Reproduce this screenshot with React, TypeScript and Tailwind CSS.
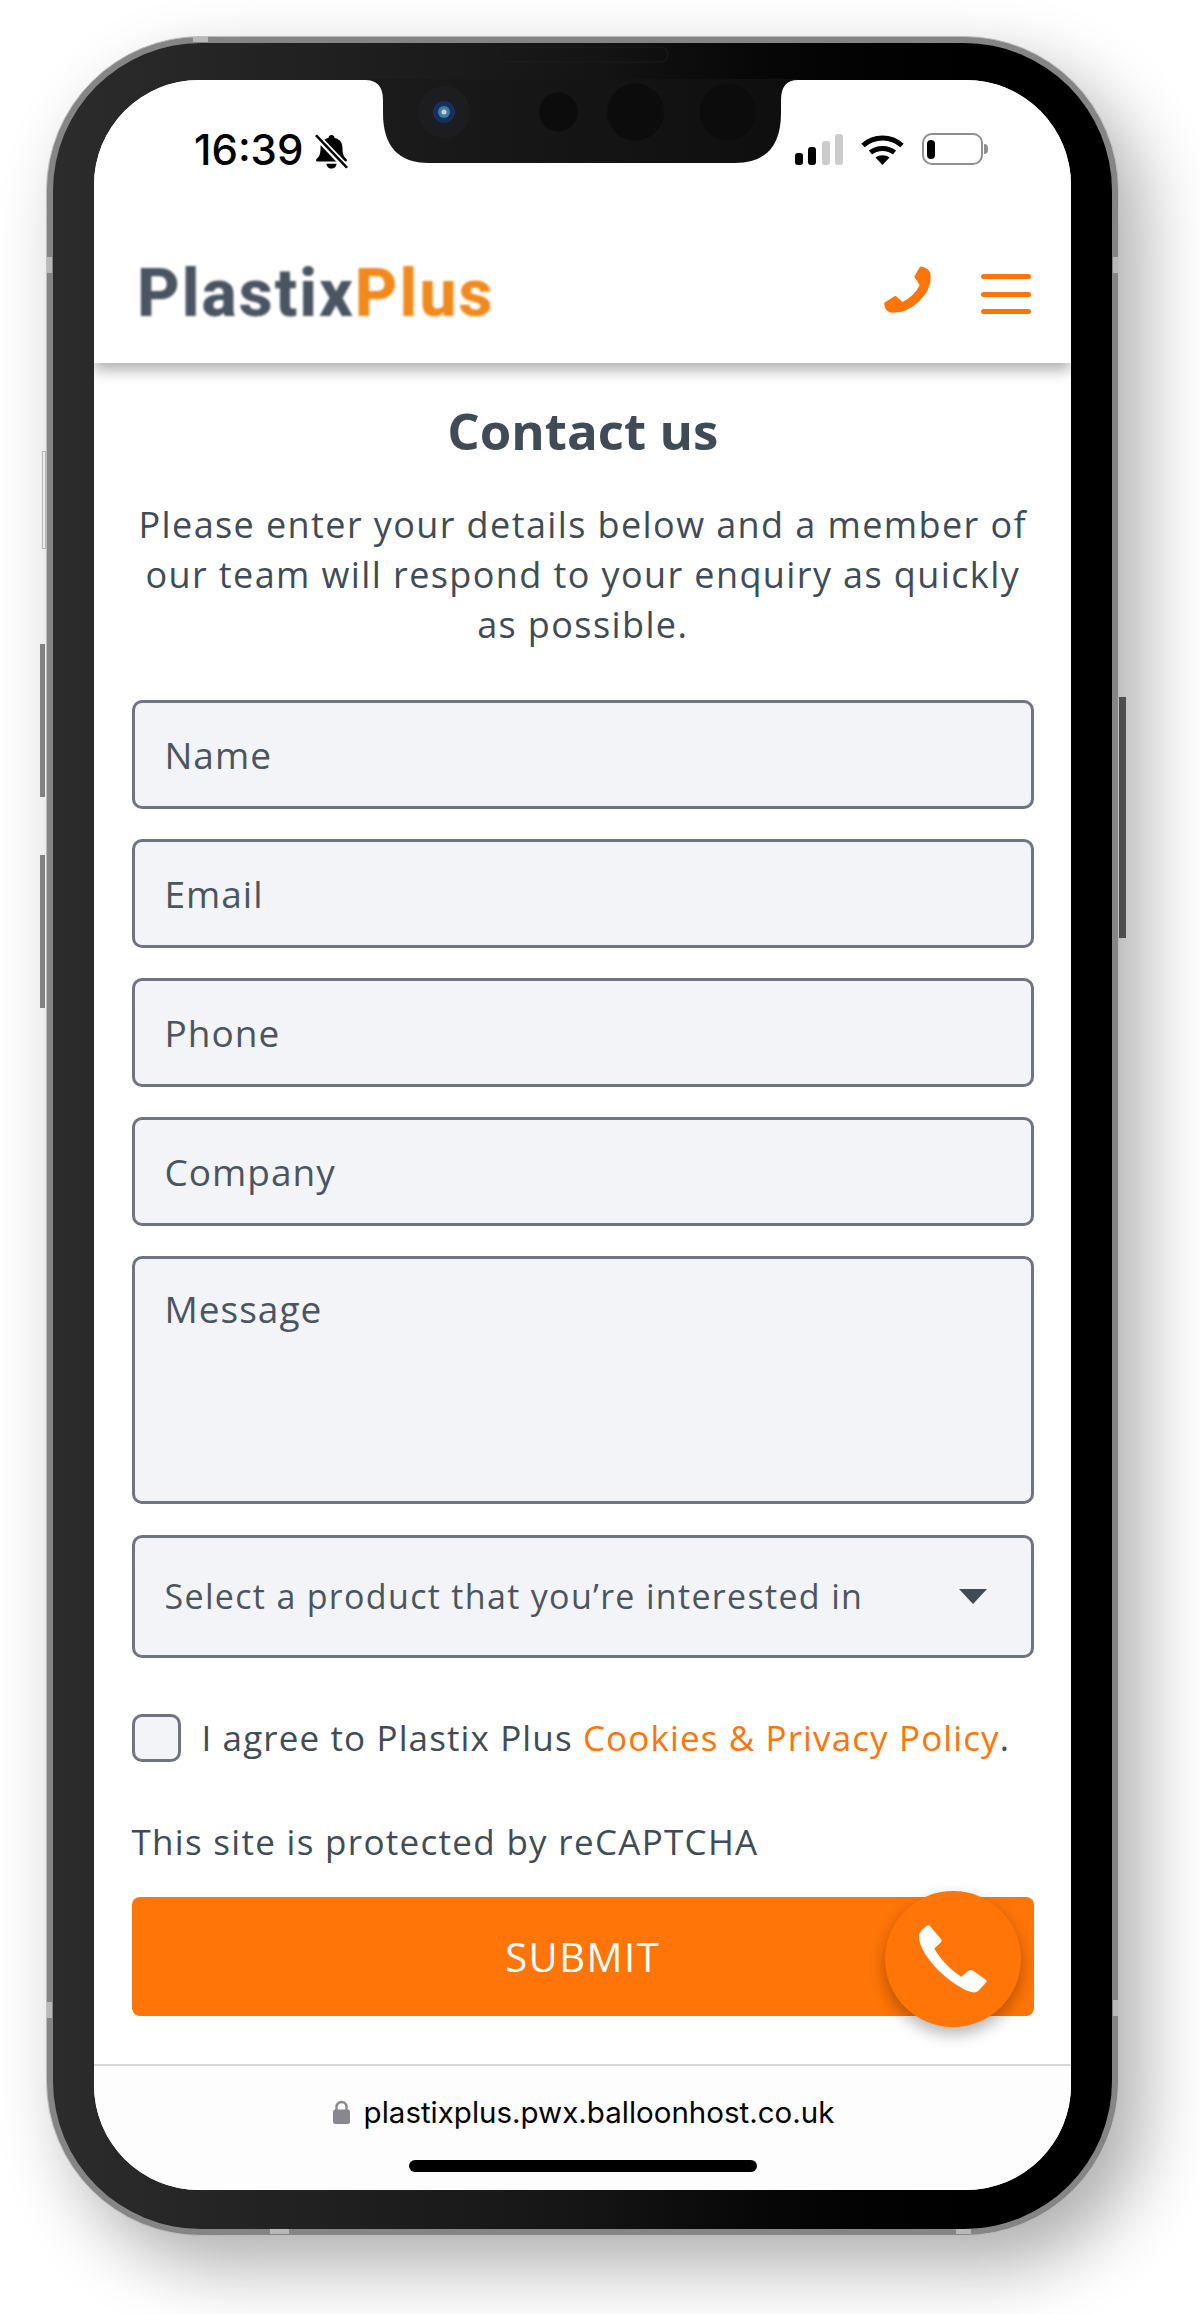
const fields = ["Name", "Email", "Phone", "Company"];

function Field({ label }: { label: string }) {
  return (
    <div className="flex h-[109px] items-center rounded-[10px] border-[3px] border-[#6f7480] bg-[#f3f4f8] pl-[30px] text-[37px] tracking-[1px] text-[#4b5560]">
      {label}
    </div>
  );
}

function BellOffIcon() {
  return (
    <svg viewBox="0 0 33 40" className="h-[35px] w-[33px]" preserveAspectRatio="none">
      <path d="M16.5 1c2 0 3 1.500 3 3.500 6 1.500 8 6 8 12 0 6 1 9 4 12 1 1.500 .5 3-1.500 3H3c-2 0-2.500-1.500-1.500-3 3-3 4-6 4-12 0-6 2-10.500 8-12C13.500 2.500 14.500 1 16.500 1z" fill="#000" />
      <path d="M11.500 34h10c0 3-2 5.500-5 5.500s-5-2.500-5-5.500z" fill="#000" />
      <path d="M2 3l30 36" stroke="#fff" strokeWidth="7" />
      <path d="M1 1.500l31 37" stroke="#000" strokeWidth="2.600" />
    </svg>
  );
}

function WifiIcon() {
  return (
    <svg viewBox="0 0 43 31" className="h-[31px] w-[43px]">
      <path d="M2 11.500C13 1.500 30 1.500 41 11.500" fill="none" stroke="#000" strokeWidth="5" />
      <path d="M9.500 18.500c6.500-5.500 17.500-5.500 24 0" fill="none" stroke="#000" strokeWidth="5" />
      <path d="M14.500 23.500c4-3 10-3 14 0L21.500 31z" fill="#000" />
    </svg>
  );
}

function StatusBar() {
  return (
    <div className="flex h-[165px] justify-between pl-[100px] pr-[83px] pt-[54px]">
      <div className="flex items-start gap-[12px]">
        <span className="font-['Inter',sans-serif] text-[42px] leading-[32px] font-medium text-black">16:39</span>
        <BellOffIcon />
      </div>
      <div className="flex items-start gap-[18px]">
        <div className="flex h-[31px] items-end gap-[5.500px]">
          <div className="h-[12px] w-[8px] rounded-[3px] bg-black" />
          <div className="h-[18px] w-[8px] rounded-[3px] bg-black" />
          <div className="h-[24px] w-[8px] rounded-[3px] bg-[#cccccc]" />
          <div className="h-[31px] w-[8px] rounded-[3px] bg-[#cccccc]" />
        </div>
        <WifiIcon />
        <div className="-mt-[1px] flex items-center">
          <div className="flex h-[32px] w-[61px] items-center rounded-[10px] border-[2.500px] border-[#8f8f8f] pl-[2.500px]">
            <div className="h-[19px] w-[8px] rounded-[4px] bg-black" />
          </div>
          <div className="ml-[1px] h-[10px] w-[4px] rounded-r-full bg-[#8f8f8f]" />
        </div>
      </div>
    </div>
  );
}

function Header() {
  return (
    <header className="relative z-10 bg-white shadow-[0_7px_14px_rgba(0,0,0,0.32)]">
      <StatusBar />
      <div className="flex h-[118px] items-start justify-between pl-[43px] pr-[40px] pt-[15px]">
        <div className="font-['Roboto',sans-serif] text-[66px] leading-[68px] font-extrabold tracking-[2px] blur-[1px]">
          <span className="text-[#4a5561]">Plastix</span>
          <span className="text-[#f08a1d]">Plus</span>
        </div>
        <div className="flex h-[68px] items-center gap-[50px]">
          <svg viewBox="742 798 123 142" className="mb-[9px] h-[47px] w-[47px]" preserveAspectRatio="none">
            <path
              d="M838 802C852 804 862 814 862 832C862 880 815 937 765 937C752 937 745 925 745 910L772 891L790 910C810 900 830 877 838 856L824 830Z"
              fill="#ff7507"
              stroke="#ff7507"
              strokeWidth="5"
              strokeLinejoin="round"
            />
          </svg>
          <div className="flex w-[50px] flex-col gap-[12.500px]">
            <div className="h-[5px] rounded-full bg-[#ff7507]" />
            <div className="h-[5px] rounded-full bg-[#ff7507]" />
            <div className="h-[5px] rounded-full bg-[#ff7507]" />
          </div>
        </div>
      </div>
    </header>
  );
}

function Form() {
  return (
    <main className="pl-[37.500px] pr-[37px] pt-[53px] font-['Open_Sans',sans-serif] text-[#414b56]">
      <h1 className="h-[28px] text-center text-[51px] leading-[28px] font-bold">Contact us</h1>
      <p className="mt-[56px] text-center text-[36px] leading-[50px] tracking-[1.400px]">
        Please enter your details below and a member of
        <br />
        our team will respond to your enquiry as quickly
        <br />
        as possible.
      </p>
      <div className="mt-[50px] flex flex-col gap-[30px]">
        {fields.map((f) => (
          <Field key={f} label={f} />
        ))}
        <div className="h-[248px] rounded-[10px] border-[3px] border-[#6f7480] bg-[#f3f4f8] pl-[30px] pt-[26px] text-[37px] leading-[48px] tracking-[1px] text-[#4b5560]">
          Message
        </div>
        <div className="mt-[1px] flex h-[123px] items-center justify-between rounded-[10px] border-[3px] border-[#6f7480] bg-[#f3f4f8] pl-[30px] pr-[44px] text-[34px] tracking-[1.320px] text-[#4b5560]">
          Select a product that you’re interested in
          <div className="h-[15px] w-[28px] bg-[#414b56] [clip-path:polygon(0_0,100%_0,50%_100%)]" />
        </div>
      </div>
      <div className="mt-[56px] flex h-[48px] items-center text-[35px] tracking-[1.120px]">
        <div className="h-[48px] w-[49px] rounded-[10px] border-[3px] border-[#6f7480] bg-[#f3f4f8]" />
        <span className="ml-[21px]">
          I agree to Plastix Plus <span className="text-[#ff7507]">Cookies &amp; Privacy Policy</span>.
        </span>
      </div>
      <div className="mt-[55px] text-[35px] leading-[50px] tracking-[1.300px]">This site is protected by reCAPTCHA</div>
      <button className="mt-[30px] flex h-[119px] w-full items-center justify-center rounded-[8px] bg-[#ff7507] text-[40px] tracking-[1.500px] text-white">
        SUBMIT
      </button>
    </main>
  );
}

function UrlBar() {
  return (
    <footer className="mt-auto flex h-[126px] flex-col items-center border-t-2 border-[#d8d8d8] bg-[#fdfdfd]">
      <div className="mt-[24px] flex h-[44px] items-center gap-[14px] pl-[2px] font-['Inter',sans-serif] text-[29.500px] text-black">
        <svg viewBox="0 0 17 24" className="h-[24px] w-[17px]">
          <path d="M3.500 10V7a5 5 0 0 1 10 0V10" fill="none" stroke="#88878f" strokeWidth="2.400" />
          <rect x="0" y="9.500" width="17" height="14.500" rx="2.500" fill="#88878f" />
        </svg>
        plastixplus.pwx.balloonhost.co.uk
      </div>
      <div className="mt-[26px] h-[12px] w-[348px] rounded-full bg-black" />
    </footer>
  );
}

function CallButton() {
  return (
    <div className="absolute bottom-[163px] right-[50px] z-20 flex h-[136px] w-[136px] items-center justify-center rounded-full bg-[#ff7507] shadow-[0_7px_16px_rgba(0,0,0,0.3)]">
      <svg viewBox="835 372 178 206" className="h-[68px] w-[68px]" preserveAspectRatio="none">
        <path
          d="M862 373L893 415Q896 420 892 425L875 443C890 475 920 510 946 529L965 510Q970 506 976 510L1010 538Q1014 542 1010 547L990 572Q986 577 975 576C940 570 850 490 836 420Q833 400 840 390L855 374Q859 371 862 373Z"
          fill="#fff"
        />
      </svg>
    </div>
  );
}

function Hardware() {
  // notch, camera and speaker, drawn in page coordinates
  return (
    <svg viewBox="365 42 433 122" className="absolute left-[318px] top-[5px] z-30 h-[122px] w-[433px]">
      <defs>
        <linearGradient id="notchFill">
          <stop offset="0" stopColor="#1b1b1b" />
          <stop offset="1" stopColor="#0e0e0e" />
        </linearGradient>
      </defs>
      <rect x="496" y="47" width="172" height="15" rx="7.500" fill="none" stroke="#1c1c1c" strokeWidth="1" />
      <path d="M365 79H798V80Q781 80 781 100V113Q781 163 735 163H429Q383 163 383 113V100Q383 80 365 80Z" fill="url(#notchFill)" />
      <circle cx="444" cy="112" r="26" fill="#1d1d1f" />
      <circle cx="444" cy="112" r="11" fill="#16305e" />
      <circle cx="444" cy="112" r="6" fill="#3d7f9f" />
      <circle cx="444" cy="112" r="2.500" fill="#c8d0d8" />
      <circle cx="558.500" cy="112" r="19.500" fill="#0c0c0c" />
      <circle cx="635.500" cy="112" r="28.500" fill="#0c0c0c" />
      <circle cx="728" cy="112" r="28.500" fill="#0c0c0c" />
    </svg>
  );
}

function Hw({ className }: { className: string }) {
  return <div className={"absolute " + className} />;
}

export default function App() {
  return (
    <div className="relative h-[2314px] w-[1200px] overflow-hidden bg-white pl-[46px] pt-[36px]">
      <Hw className="left-[42px] top-[451px] h-[98px] w-[4px] border border-[#c4c4c4] bg-white" />
      <Hw className="left-[39px] top-[637px] h-[163px] w-[7px] border-x-[1.500px] border-b-[3px] border-t-[7px] border-white bg-[#8c8c8c]" />
      <Hw className="left-[39px] top-[848px] h-[163px] w-[7px] border-x-[1.500px] border-b-[3px] border-t-[7px] border-white bg-[#8c8c8c]" />
      <Hw className="left-[1119px] top-[687px] h-[254px] w-[7px] border-b-[3px] border-t-[10px] border-white bg-[#666666]" />
      <div className="relative h-[2200px] w-[1073px] rounded-[155px] border border-[#bdbdbd] bg-[#858585] p-[6px] shadow-[24px_30px_70px_rgba(0,0,0,0.32)]">
        <div className="h-full w-full rounded-[148px] bg-gradient-to-r from-[#2c2c2c] via-[#151515] via-50% to-black pb-[39px] pl-[41px] pr-[41px] pt-[37px]">
          <div className="relative flex h-full flex-col overflow-hidden rounded-[105px] bg-white">
            <Header />
            <Form />
            <UrlBar />
            <CallButton />
          </div>
        </div>
        <Hardware />
      </div>
      {/* antenna bands on the rim */}
      <Hw className="left-[193px] top-[37px] h-[5px] w-[15px] bg-[#b8b8b8]" />
      <Hw className="left-[47px] top-[257px] h-[16px] w-[5px] bg-[#b8b8b8]" />
      <Hw className="left-[1113px] top-[257px] h-[16px] w-[5px] bg-[#b8b8b8]" />
      <Hw className="left-[47px] top-[2002px] h-[16px] w-[5px] bg-[#b8b8b8]" />
      <Hw className="left-[1113px] top-[2000px] h-[16px] w-[5px] bg-[#b8b8b8]" />
      <Hw className="left-[270px] top-[2229px] h-[5px] w-[19px] bg-[#b8b8b8]" />
      <Hw className="left-[956px] top-[2229px] h-[5px] w-[15px] bg-[#b8b8b8]" />
    </div>
  );
}
